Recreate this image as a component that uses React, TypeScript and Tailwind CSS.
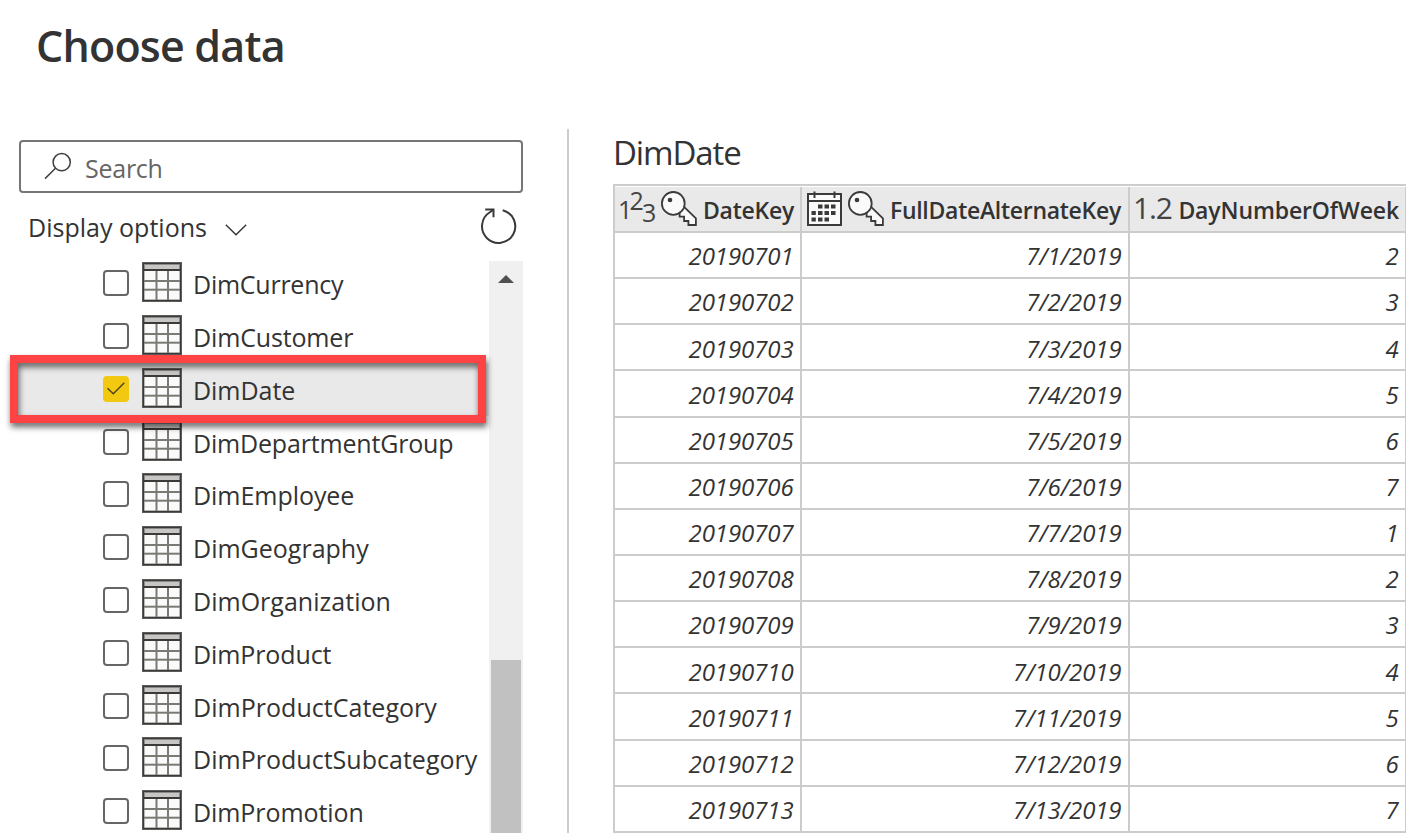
type TableItem = { name: string; tracking: string; checked?: boolean };

const tables: TableItem[] = [
  { name: "DimCurrency", tracking: "tracking-[-0.25px]" },
  { name: "DimCustomer", tracking: "tracking-[-0.15px]" },
  { name: "DimDate", tracking: "tracking-[-0.05px]", checked: true },
  { name: "DimDepartmentGroup", tracking: "tracking-[-0.18px]" },
  { name: "DimEmployee", tracking: "tracking-[-0.05px]" },
  { name: "DimGeography", tracking: "tracking-[0px]" },
  { name: "DimOrganization", tracking: "tracking-[0.02px]" },
  { name: "DimProduct", tracking: "tracking-[-0.1px]" },
  { name: "DimProductCategory", tracking: "tracking-[0.03px]" },
  { name: "DimProductSubcategory", tracking: "tracking-[0.02px]" },
  { name: "DimPromotion", tracking: "tracking-[-0.08px]" },
];

const rows: [string, string, string][] = Array.from({ length: 13 }, (_, i) => [
  String(20190701 + i),
  `7/${i + 1}/2019`,
  String(((i + 1) % 7) + 1),
]);

function TableIcon() {
  return (
    <svg className="size-10 shrink-0" viewBox="0 0 40 40">
      <rect x="0" y="0" width="40" height="40" fill="#5c5c5a" />
      <rect x="1" y="1" width="38" height="38" fill="#3b3a38" />
      <rect x="2" y="2" width="36" height="5" fill="#8a8a88" />
      <rect x="3" y="3" width="34" height="4" fill="#c8c6c4" />
      <rect x="2" y="9" width="36" height="29" fill="#7a7974" />
      <g fill="#fafafa">
        <rect x="2.5" y="9" width="11" height="9" />
        <rect x="15.5" y="9" width="9.5" height="9" />
        <rect x="27" y="9" width="10.5" height="9" />
        <rect x="2.5" y="20" width="11" height="6.7" />
        <rect x="15.5" y="20" width="9.5" height="6.7" />
        <rect x="27" y="20" width="10.5" height="6.7" />
        <rect x="2.5" y="28.7" width="11" height="8.8" />
        <rect x="15.5" y="28.7" width="9.5" height="8.8" />
        <rect x="27" y="28.7" width="10.5" height="8.8" />
      </g>
    </svg>
  );
}

function Checkbox({ checked }: { checked?: boolean }) {
  if (checked) {
    return (
      <span className="size-[26px] shrink-0 rounded-[4px] bg-[#f2c811]">
        <svg className="size-[26px]" viewBox="0 0 26 26" fill="none" stroke="#4a4320" strokeWidth="1.4">
          <path d="M4.5 12.2 L10.3 17.7 L21.3 6.7" />
        </svg>
      </span>
    );
  }
  return <span className="-mt-px size-[26px] shrink-0 rounded-[4px] border-2 border-[#666] bg-white" />;
}

function KeyIcon({ className }: { className: string }) {
  return (
    <svg className={className} viewBox="0 0 36 36" fill="#fafafa" stroke="#3b3a39" strokeWidth="1.8">
      <path d="M23.3 16.2 L34.9 27.4 V34 H27.4 V30 H23.1 V25.6 H18.6 V20.5 L16.5 22.2" />
      <circle cx="12.3" cy="12.4" r="11.4" />
      <circle cx="9" cy="9" r="2.3" fill="#3b3a39" stroke="none" />
    </svg>
  );
}

function CalendarIcon() {
  return (
    <svg className="h-9 w-[35px] shrink-0" viewBox="0 0 35 36">
      <rect x="1" y="3" width="33" height="31" fill="#fafafa" stroke="#3b3a39" strokeWidth="2" />
      <path d="M0 10 H35" stroke="#3b3a39" strokeWidth="2" />
      <path d="M7.5 0.5 V7 M27.5 0.5 V7" stroke="#3b3a39" strokeWidth="2" />
      <g fill="#3b3a39">
        <rect x="11" y="13.5" width="4.5" height="4" />
        <rect x="17.5" y="13.5" width="4.5" height="4" />
        <rect x="24" y="13.5" width="4.5" height="4" />
        <rect x="4.5" y="20" width="4.3" height="4" />
        <rect x="11" y="20" width="4.5" height="4" />
        <rect x="17.5" y="20" width="4.5" height="4" />
        <rect x="24" y="20" width="4.5" height="4" />
        <rect x="4.5" y="26.5" width="4.3" height="4" />
        <rect x="11" y="26.5" width="4.5" height="4" />
        <rect x="17.5" y="26.5" width="4.5" height="4" />
      </g>
    </svg>
  );
}

function WholeNumberIcon() {
  return (
    <span className="flex h-9 w-[38px] shrink-0 items-start text-[25px] leading-[26px] text-[#444]">
      <span className="-ml-[1px] w-[11.5px] pt-[5px]">1</span>
      <span className="-mt-[4px] w-[12.5px]">2</span>
      <span className="w-[13px] pt-[8px]">3</span>
    </span>
  );
}

function Sidebar() {
  return (
    <aside className="flex w-[567px] shrink-0 flex-col">
      <div className="mt-[140px] ml-[19px] flex h-[53px] w-[504px] shrink-0 items-center rounded-[4px] border-2 border-[#767676] pl-[23px]">
        <svg className="-mt-[1px] size-7" viewBox="0 0 28 28" fill="none" stroke="#404040" strokeWidth="1.5">
          <circle cx="17.7" cy="10.2" r="8.6" />
          <path d="M11.5 16.3 L1 26.6" />
        </svg>
        <span className="mt-[3px] ml-[13px] text-[25px] leading-8 tracking-[-0.25px] text-[#666]">Search</span>
      </div>
      <div className="ml-[28px] flex h-[64.4px] w-[489px] shrink-0 items-center">
        <span className="mt-[4px] text-[25px] leading-8 tracking-[0.02px]">Display options</span>
        <svg className="mt-[9px] ml-[18px] h-3 w-[22px]" viewBox="0 0 22 12" fill="none" stroke="#333" strokeWidth="1.4">
          <path d="M0.8 0.8 L11 10.8 L21.2 0.8" />
        </svg>
        <svg className="mt-[2px] ml-auto h-9 w-9" viewBox="0 0 36 36" fill="none" stroke="#3a3a3a" strokeWidth="2">
          <path d="M21.7 2.2 A16.6 16.6 0 1 1 9.2 4 L12.4 1.6" />
          <path d="M4.2 1.5 H12.5 V9.2" />
        </svg>
      </div>
      <div className="relative flex w-[523px] shrink-0 grow justify-between">
        <div className="flex w-[489px] flex-col pl-[10px]">
          {tables.map((t) => (
            <div
              key={t.name}
              className={
                t.checked
                  ? "flex h-[52.8px] shrink-0 items-center bg-[#e9e9e9] pl-[93px]"
                  : "flex h-[52.8px] shrink-0 items-center pl-[93px]"
              }
            >
              <Checkbox checked={t.checked} />
              <span className="mt-[-3px] ml-[13px] flex">
                <TableIcon />
              </span>
              <span className={`mt-[1px] ml-[11px] text-[25px] leading-8 whitespace-nowrap ${t.tracking}`}>{t.name}</span>
            </div>
          ))}
        </div>
        <div className="mt-[4px] flex w-[34px] flex-col items-center bg-[#f0f0f0]">
          <svg className="mt-[14px] h-[8px] w-4 shrink-0" viewBox="0 0 16 8">
            <path d="M8 0 L16 8 H0 Z" fill="#505050" />
          </svg>
          <div className="mt-[377px] w-[30px] grow bg-[#c1c1c1]" />
        </div>
        <div className="absolute top-[97.6px] left-[10px] h-[68px] w-[476px] border-8 border-[#fd4343] drop-shadow-[1px_4px_3px_rgba(0,0,0,0.6)]" />
      </div>
    </aside>
  );
}

function Preview() {
  const head = "flex items-center border-r-2 border-[#ccc]";
  const title = "mt-[1px] ml-auto text-[23px] leading-8 font-semibold whitespace-nowrap";
  return (
    <main className="flex grow flex-col pl-[44px]">
      <h2 className="mt-[129px] text-[33px] leading-[48px] tracking-[-1.1px]">DimDate</h2>
      <div className="mt-[7px] flex w-[794px] flex-col border-t-2 border-l-2 border-[#ccc] pt-px">
        <div className="grid h-[46px] shrink-0 grid-cols-[187px_328px_277px] border-b-2 border-[#ccc] bg-[#e9e9e9]">
          <div className={`${head} pr-[6px] pl-[4px]`}>
            <WholeNumberIcon />
            <KeyIcon className="ml-[4px] size-9 shrink-0" />
            <span className={`${title} tracking-[-0.25px]`}>DateKey</span>
          </div>
          <div className={`${head} pr-[7px] pl-[5px]`}>
            <CalendarIcon />
            <KeyIcon className="ml-[6px] size-9 shrink-0" />
            <span className={`${title} tracking-[-0.28px]`}>FullDateAlternateKey</span>
          </div>
          <div className={`${head} pr-[6px] pl-[3px]`}>
            <span className="-mt-[2px] text-[30px] leading-8 tracking-[-1.2px] text-[#444]">1.2</span>
            <span className={`${title} tracking-[-0.12px]`}>DayNumberOfWeek</span>
          </div>
        </div>
        {rows.map((r) => (
          <div key={r[0]} className="grid h-[46.15px] shrink-0 grid-cols-[187px_328px_277px] border-b-2 border-[#ccc]">
            {r.map((c, i) => (
              <div
                key={i}
                className="flex items-center justify-end border-r-2 border-[#ccc] pt-[2.4px] pr-[6.5px] text-[24px] leading-8 tracking-[-0.1px] italic"
              >
                {c}
              </div>
            ))}
          </div>
        ))}
      </div>
    </main>
  );
}

export default function App() {
  return (
    <div className="relative flex h-[833px] w-[1406px] overflow-hidden bg-white font-['Open_Sans','Noto_Sans',sans-serif] text-[#333]">
      <h1 className="absolute top-[16px] left-[36px] text-[43px] leading-[60px] font-semibold tracking-[-0.8px] whitespace-nowrap">
        Choose data
      </h1>
      <Sidebar />
      <div className="mt-[129px] w-[2px] shrink-0 bg-[#ccc]" />
      <Preview />
    </div>
  );
}
